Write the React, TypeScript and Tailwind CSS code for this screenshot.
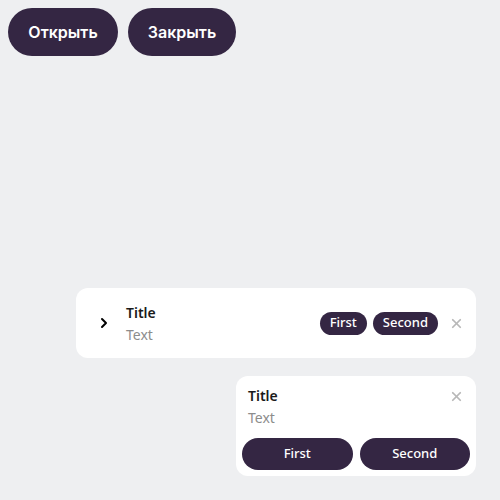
import { ChevronRight, X } from "lucide-react";

function Toast() {
  return (
    <div className="flex h-[70px] w-[400px] items-center rounded-xl bg-white pl-[20px] pr-[12px]">
      <ChevronRight className="h-4 w-4 text-black" strokeWidth={3} />
      <div className="ml-[14px] flex flex-1 flex-col pt-[1px]">
        <span className="text-[14px] font-semibold leading-[20px] text-[#1a1a1a]">Title</span>
        <span className="mt-[2px] text-[14px] leading-[20px] text-[#8c8c8c]">Text</span>
      </div>
      <div className="flex gap-[6px]">
        <button className="h-[23px] rounded-full bg-[#342643] px-[10px] text-[13px] font-medium text-white">
          First
        </button>
        <button className="h-[23px] rounded-full bg-[#342643] px-[10px] text-[13px] font-medium text-white">
          Second
        </button>
      </div>
      <X className="ml-[11px] h-[15px] w-[15px] text-[#b8b8b8]" strokeWidth={2.75} />
    </div>
  );
}

function Dialog() {
  return (
    <div className="flex w-[240px] flex-col rounded-xl bg-white p-[6px]">
      <div className="flex items-start justify-between px-[6px] pt-[4px]">
        <div className="flex flex-col">
          <span className="text-[14px] font-semibold leading-[20px] text-[#1a1a1a]">Title</span>
          <span className="mt-[2px] text-[14px] leading-[20px] text-[#8c8c8c]">Text</span>
        </div>
        <X className="mt-[3px] h-[15px] w-[15px] text-[#b8b8b8]" strokeWidth={2.75} />
      </div>
      <div className="mt-[10px] flex gap-[7px]">
        <button className="h-[32px] flex-1 rounded-full bg-[#342643] text-[13px] font-medium text-white">
          First
        </button>
        <button className="h-[32px] flex-1 rounded-full bg-[#342643] text-[13px] font-medium text-white">
          Second
        </button>
      </div>
    </div>
  );
}

export default function App() {
  return (
    <div
      className="flex h-[500px] w-[500px] flex-col justify-between bg-[#eeeff1] pb-[24px] pl-[8px] pr-[24px] pt-[8px]"
      style={{ fontFamily: '"Noto Sans", sans-serif' }}
    >
      <div className="flex gap-[10px]" style={{ fontFamily: "Inter, sans-serif" }}>
        <button className="h-[48px] w-[110px] rounded-full bg-[#342643] text-[16px] font-semibold text-white">
          Открыть
        </button>
        <button className="h-[48px] w-[108px] rounded-full bg-[#342643] text-[16px] font-semibold text-white">
          Закрыть
        </button>
      </div>
      <div className="flex flex-col items-end gap-[18px]">
        <Toast />
        <Dialog />
      </div>
    </div>
  );
}
